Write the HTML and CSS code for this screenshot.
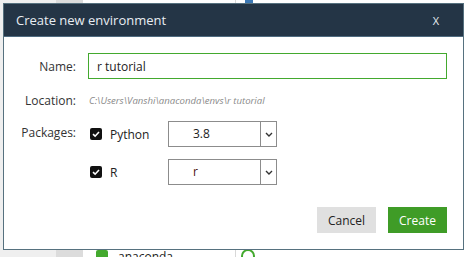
FILE: index.html
```html
<!DOCTYPE html>
<html lang="en">
<head>
  <meta charset="UTF-8" />
  <title>Create new environment</title>
  <link rel="stylesheet" href="styles.css">
</head>
<body>

  <div class="app">
    <div class="side"></div>
    <div class="side-dark"></div>
    <div class="env-list">
      <div class="env-row">
        <span class="env-check"></span>
        <span class="env-name">anaconda</span>
      </div>
    </div>
    <div class="pkg-list">
      <div class="pkg-top"></div>
      <div class="pkg-row"><span class="pkg-ring"></span></div>
    </div>
  </div>

  <div class="dialog">
    <div class="dialog-head">
      <span class="dialog-title">Create new environment</span>
      <span class="dialog-close">X</span>
    </div>

    <form class="dialog-body">
      <label class="field-label">Name:</label>
      <input class="name-input" type="text" value="r tutorial" />

      <label class="field-label">Location:</label>
      <div class="location">C:\Users\Vanshi\anaconda\envs\r tutorial</div>

      <label class="field-label packages-label">Packages:</label>
      <div class="packages">
        <div class="pkg">
          <span class="check">
            <svg width="12" height="12" viewBox="0 0 12 12"><path d="M3 6.2 L5.1 8.2 L9 4" fill="none" stroke="#fff" stroke-width="1.6"/></svg>
          </span>
          <span class="pkg-name">Python</span>
          <div class="select">
            <span class="select-value">3.8</span>
            <span class="select-arrow">
              <svg width="8" height="5" viewBox="0 0 8 5"><path d="M1 1 L4 4 L7 1" fill="none" stroke="#333" stroke-width="1.4"/></svg>
            </span>
          </div>
        </div>
        <div class="pkg">
          <span class="check">
            <svg width="12" height="12" viewBox="0 0 12 12"><path d="M3 6.2 L5.1 8.2 L9 4" fill="none" stroke="#fff" stroke-width="1.6"/></svg>
          </span>
          <span class="pkg-name">R</span>
          <div class="select">
            <span class="select-value r-value">r</span>
            <span class="select-arrow">
              <svg width="8" height="5" viewBox="0 0 8 5"><path d="M1 1 L4 4 L7 1" fill="none" stroke="#333" stroke-width="1.4"/></svg>
            </span>
          </div>
        </div>
      </div>

      <div class="actions">
        <button type="button" class="btn btn-cancel">Cancel</button>
        <button type="submit" class="btn btn-create">Create</button>
      </div>
    </form>
  </div>

</body>
</html>
```

FILE: styles.css
```css
body {
  margin: 0;
  width: 465px;
  height: 257px;
  overflow: hidden;
  font-family: "Open Sans", "Noto Sans", sans-serif;
  position: relative;
}

/* app behind the dialog */
.app {
  display: flex;
  height: 257px;
}

.side {
  width: 56px;
  background: #efefef;
}

.side-dark {
  width: 27px;
  background: #dcdcdc;
}

.env-list {
  width: 152px;
  border-right: 1px solid #d8d8d8;
  display: flex;
  flex-direction: column;
  justify-content: flex-end;
}

.env-row {
  display: flex;
  align-items: center;
  gap: 10px;
  padding-left: 13px;
  height: 14px;
  margin-bottom: -6px;
}

.env-check {
  width: 12px;
  height: 12px;
  border-radius: 2px;
  background: #43a92e;
}

.env-name {
  font-size: 12px;
  color: #222;
}

.pkg-list {
  flex: 1;
  display: flex;
  flex-direction: column;
  justify-content: space-between;
}

.pkg-top {
  margin-left: 9px;
  width: 8px;
  height: 3px;
  background: #3c78b4;
}

.pkg-row {
  padding-left: 5px;
  height: 8px;
}

.pkg-ring {
  display: block;
  width: 10px;
  height: 10px;
  border: 2px solid #43a92e;
  border-radius: 50%;
}

/* dialog */
.dialog {
  position: absolute;
  left: 3px;
  top: 3px;
  width: 459px;
  height: 245px;
  background: #fff;
  border: 1px solid #56717f;
}

.dialog-head {
  height: 32px;
  background: #243546;
  border-bottom: 1px solid #4f6b80;
  display: flex;
  align-items: center;
  justify-content: space-between;
  padding: 0 24px 0 12px;
}

.dialog-title {
  color: #e8edf2;
  font-size: 13px;
}

.dialog-close {
  color: #e8edf2;
  font-size: 11px;
}

.dialog-body {
  display: grid;
  grid-template-columns: 72px 1fr;
  column-gap: 12px;
  padding: 16px 16px 0 0;
  align-items: center;
}

.field-label {
  text-align: right;
  font-size: 12px;
  color: #333;
}

.name-input {
  height: 26px;
  box-sizing: border-box;
  border: 1px solid #43a92e;
  padding: 0 8px;
  font-family: inherit;
  font-size: 12px;
  color: #222;
  outline: none;
}

.location {
  height: 42px;
  display: flex;
  align-items: center;
  font-size: 9.6px;
  font-style: italic;
  color: #8a8a8a;
  padding-left: 1px;
}

.packages-label {
  align-self: start;
  margin-top: 3px;
}

.packages {
  display: flex;
  flex-direction: column;
  gap: 12px;
}

.pkg {
  display: flex;
  align-items: center;
  padding-left: 2px;
}

.check {
  width: 12px;
  height: 12px;
  background: #111;
  border-radius: 2px;
  display: flex;
}

.pkg-name {
  width: 58px;
  margin-left: 8px;
  font-size: 12px;
  color: #222;
}

.select {
  width: 107px;
  height: 24px;
  border: 1px solid #8c8c8c;
  display: flex;
}

.select-value {
  flex: 1;
  padding-left: 24px;
  font-size: 12px;
  line-height: 24px;
  color: #222;
}

.r-value {
  color: #4a1010;
}

.select-arrow {
  width: 15px;
  border-left: 1px solid #8c8c8c;
  display: flex;
  align-items: center;
  justify-content: center;
}

.actions {
  grid-column: 1 / 3;
  display: flex;
  justify-content: flex-end;
  gap: 12px;
  margin-top: 22px;
}

.btn {
  height: 26px;
  width: 59px;
  border: none;
  font-family: inherit;
  font-size: 12px;
  cursor: pointer;
}

.btn-cancel {
  background: #e0e0e0;
  color: #222;
}

.btn-create {
  background: #3f9c27;
  color: #fff;
}
```
